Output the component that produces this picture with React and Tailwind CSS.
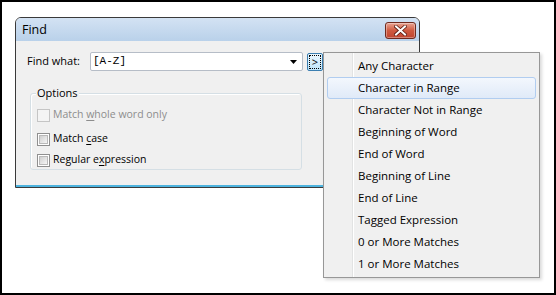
import React from "react"

const menuItems = [
  "Any Character",
  "Character in Range",
  "Character Not in Range",
  "Beginning of Word",
  "End of Word",
  "Beginning of Line",
  "End of Line",
  "Tagged Expression",
  "0 or More Matches",
  "1 or More Matches",
]

const Checkbox = ({ disabled }) => (
  <span
    className={`w-[13px] h-[13px] border flex items-center justify-center shrink-0 ${
      disabled ? "border-[#c5c5c5] bg-[#f4f4f4]" : "border-[#8f8f8f] bg-white"
    }`}
  >
    <span
      className={`w-[9px] h-[9px] ${
        disabled ? "bg-[#f4f4f4]" : "bg-gradient-to-br from-[#cfcfcf] to-[#f6f6f6] border border-[#b9b9b9]"
      }`}
    />
  </span>
)

const CloseIcon = () => (
  <svg width="13" height="11" viewBox="0 0 13 11">
    <path d="M2 1.5 L11 9.5 M11 1.5 L2 9.5" stroke="#5a1a10" strokeWidth="3.6" strokeLinecap="square" />
    <path d="M2 1.5 L11 9.5 M11 1.5 L2 9.5" stroke="#ffffff" strokeWidth="2" strokeLinecap="square" />
  </svg>
)

export default function App() {
  return (
    <div className="w-[556px] h-[295px] bg-white border-2 border-black relative overflow-hidden font-['Open_Sans',sans-serif] text-[11.5px] text-black">
      {/* dialog */}
      <div className="ml-[13px] mt-[15px] w-[405px] h-[171px] border border-[#3a3a3a] rounded-t-[6px] overflow-hidden flex flex-col bg-[#f0f0f0]">
        <div className="h-[23px] shrink-0 flex items-start justify-between bg-gradient-to-b from-[#d3e2f3] to-[#b9d1ea] pl-[6px] pr-[3px]">
          <span className="text-[12.5px] leading-[23px]">Find</span>
          <button className="mt-[4px] w-[31px] h-[17px] rounded-[3px] border border-[#6f2a1e] bg-gradient-to-b from-[#e8a493] via-[#cf5a40] to-[#c04530] flex items-center justify-center shadow-[inset_0_0_0_1px_rgba(255,255,255,0.35)]">
            <CloseIcon />
          </button>
        </div>
        <div className="flex-1 bg-[#f0f0f0] border-b-2 border-[#4db3de] pl-[11px] text-[11px]">
          <div className="mt-[11px] flex items-center">
            <span className="w-[63px]">Find what:</span>
            <div className="w-[213px] h-[19px] bg-white border border-[#b6bdc7] rounded-[2px] flex items-center justify-between pl-[2px] pr-[5px]">
              <span className="font-['Liberation_Mono',monospace] text-[11px]">[A-Z]</span>
              <svg width="7" height="4" viewBox="0 0 7 4">
                <path d="M0 0 H7 L3.5 4 Z" fill="#000" />
              </svg>
            </div>
            <button className="ml-[4px] w-[16px] h-[18px] rounded-[2px] border border-[#3c7fb1] bg-gradient-to-b from-[#eaf6fd] to-[#bfe5fa] p-[1px]">
              <span className="w-full h-full border border-dotted border-black flex items-center justify-center text-[11px] leading-none">
                &gt;
              </span>
            </button>
          </div>

          <div className="ml-[3px] mt-[22px] w-[272px] h-[77px] border border-[#d5dfe5] rounded-[3px] shadow-[inset_1px_1px_0_#fff] pl-[6px] text-[10.5px]">
            <span className="block w-fit -mt-[9px] -ml-[1px] px-[1px] bg-[#f0f0f0] leading-[15px] text-[11px]">Options</span>
            <div className="mt-[7px] h-[16px] flex items-center gap-[3px] text-[#8d8d8d]">
              <Checkbox disabled />
              <span>
                Match <span className="underline underline-offset-2">w</span>hole word only
              </span>
            </div>
            <div className="mt-[8px] h-[16px] flex items-center gap-[3px]">
              <Checkbox />
              <span>
                Match <span className="underline underline-offset-2">c</span>ase
              </span>
            </div>
            <div className="mt-[5px] h-[16px] flex items-center gap-[3px]">
              <Checkbox />
              <span>
                Regular e<span className="underline underline-offset-2">x</span>pression
              </span>
            </div>
          </div>
        </div>
      </div>

      {/* popup menu */}
      <div className="absolute left-[321px] top-[50px] w-[217px] h-[226px] border border-[#979797] py-[2px] px-[3px] bg-[linear-gradient(to_right,#f0f0f0_28px,#e2e3e3_28px,#e2e3e3_29px,#ffffff_29px,#ffffff_30px,#f0f0f0_30px)] shadow-[2px_2px_3px_rgba(0,0,0,0.15)]">
        {menuItems.map((item, i) => (
          <div
            key={item}
            className={`h-[22px] flex items-center pl-[30px] rounded-[3px] border ${
              i === 1
                ? "border-[#b1cdf0] bg-gradient-to-b from-[#f3f7fd] to-[#e0eaf8]"
                : "border-transparent"
            }`}
          >
            {item}
          </div>
        ))}
      </div>
    </div>
  )
}
